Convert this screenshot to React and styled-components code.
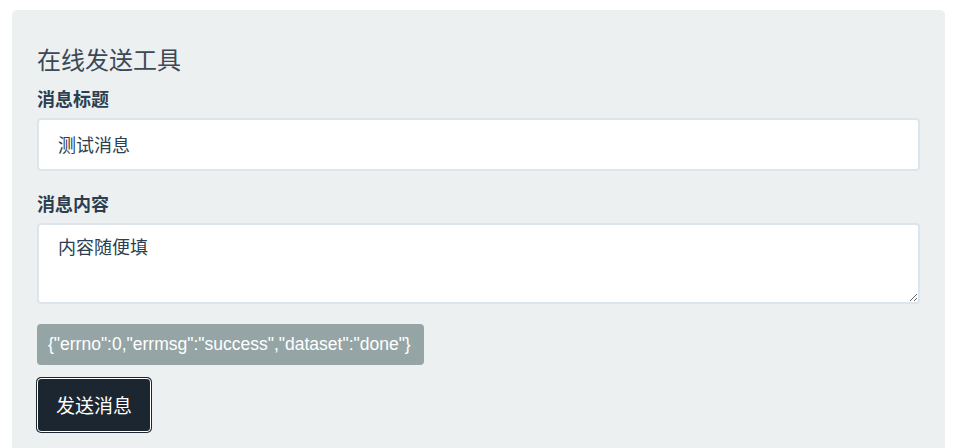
import React, { useState } from 'react';
import styled, { createGlobalStyle } from 'styled-components';

const GlobalStyle = createGlobalStyle`
  body {
    margin: 0;
    background: #fff;
    font-family: "Liberation Sans", "Noto Sans CJK SC", sans-serif;
    color: #2c3e50;
  }
`;

export default function App() {
  const [title, setTitle] = useState('测试消息');
  const [content, setContent] = useState('内容随便填');
  const result = '{"errno":0,"errmsg":"success","dataset":"done"}';

  return (
    <>
      <GlobalStyle />
      <Panel>
        <Heading>在线发送工具</Heading>
        <Field>
          <Label>消息标题</Label>
          <Input value={title} onChange={e => setTitle(e.target.value)} />
        </Field>
        <Field>
          <Label>消息内容</Label>
          <TextArea value={content} onChange={e => setContent(e.target.value)} />
        </Field>
        <Result>{result}</Result>
        <SendButton>发送消息</SendButton>
      </Panel>
    </>
  );
}

const Panel = styled.div`
  margin: 10px 14px 0 12px;
  padding: 35px 25px 30px;
  background: #ecf0f1;
  border-radius: 5px;
  display: flex;
  flex-direction: column;
  align-items: flex-start;
  min-height: 420px;
  box-sizing: border-box;
`;

const Heading = styled.h2`
  margin: 0 0 11px;
  font-family: "Noto Sans CJK SC", sans-serif;
  font-weight: 400;
  font-size: 24px;
  line-height: 1.2;
  color: #3b4856;
`;

const Field = styled.div`
  width: 100%;
  margin-bottom: 19px;
  display: flex;
  flex-direction: column;
`;

const Label = styled.label`
  font-family: "Noto Sans CJK SC", sans-serif;
  font-weight: 700;
  font-size: 18px;
  line-height: 27px;
  margin-bottom: 6px;
  color: #2c3e50;
`;

const Input = styled.input`
  box-sizing: border-box;
  width: 100%;
  height: 53px;
  padding: 0 19px;
  border: 2px solid #dce4ec;
  border-radius: 4px;
  background: #fff;
  font-family: "Noto Sans CJK SC", sans-serif;
  font-size: 18px;
  color: #2c3e50;
  outline: none;
`;

const TextArea = styled.textarea`
  box-sizing: border-box;
  width: 100%;
  height: 81px;
  padding: 10px 19px;
  border: 2px solid #dce4ec;
  border-radius: 4px;
  background: #fff;
  font-family: "Noto Sans CJK SC", sans-serif;
  font-size: 18px;
  line-height: 1.3;
  color: #2c3e50;
  outline: none;
  resize: vertical;
`;

const Result = styled.div`
  margin-top: 1px;
  height: 41px;
  padding: 0 13px 0 11px;
  display: flex;
  align-items: center;
  background: #95a5a6;
  color: #fff;
  border-radius: 4px;
  font-family: "Liberation Sans", sans-serif;
  font-size: 17.5px;
`;

const SendButton = styled.button`
  margin-top: 13px;
  height: 54px;
  padding: 0 18px;
  background: #1c2630;
  color: #fff;
  border: 1px solid #fff;
  box-shadow: 0 0 0 1px #1c2630;
  border-radius: 4px;
  font-family: "Noto Sans CJK SC", sans-serif;
  font-size: 19px;
  cursor: pointer;
`;
